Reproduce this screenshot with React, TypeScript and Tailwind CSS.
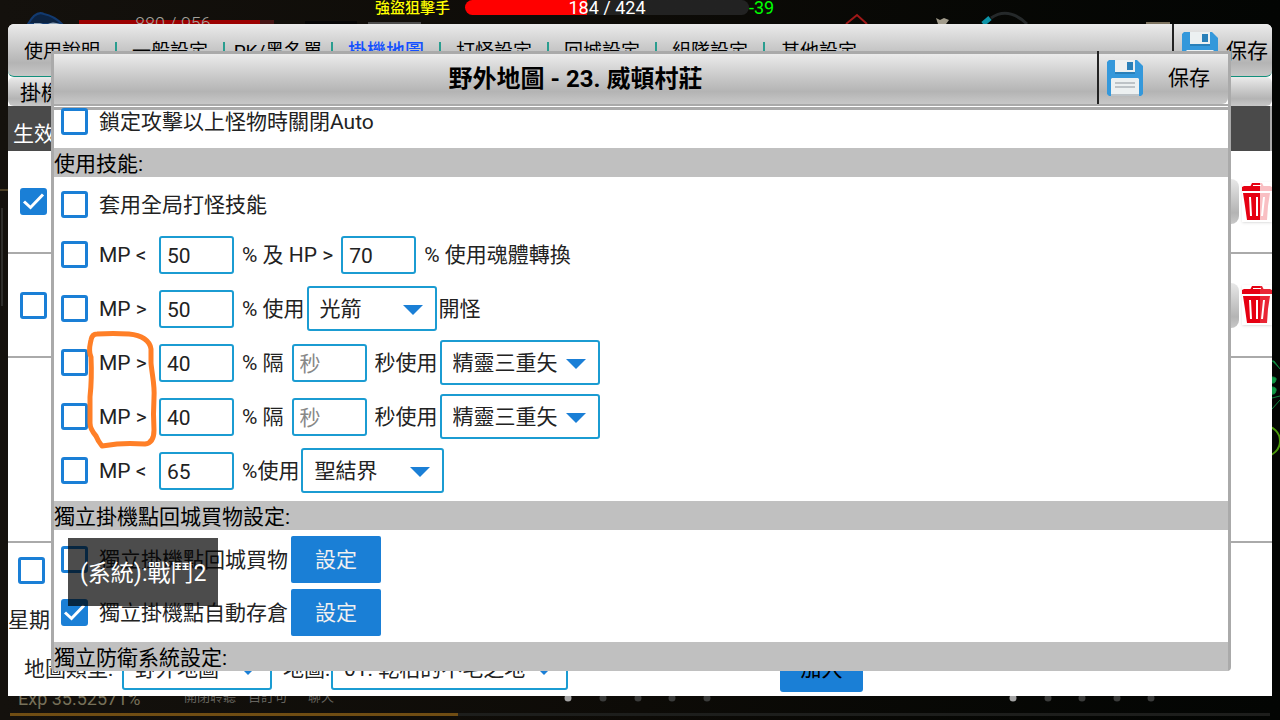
import React from "react";

const tabs = [
  "使用說明",
  "一般設定",
  "PK/黑名單",
  "掛機地圖",
  "打怪設定",
  "回城設定",
  "組隊設定",
  "其他設定",
];

const Checkbox = ({ label, checked = false }: { label: string; checked?: boolean }) => (
  <span className="relative w-[27px] h-[27px] shrink-0">
    <input
      type="checkbox"
      aria-label={label}
      defaultChecked={checked}
      className="peer block appearance-none w-full h-full rounded-[3px] border-[3px] border-[#1a7fd6] bg-white checked:bg-[#1a7fd6]"
    />
    <svg
      viewBox="0 0 27 27"
      fill="none"
      stroke="white"
      strokeWidth="3"
      className="hidden peer-checked:block absolute inset-0 pointer-events-none"
    >
      <path d="M4 13.500 L10.500 19.500 L23 6.500" />
    </svg>
  </span>
);

const Label = ({ children, className = "" }: { children: React.ReactNode; className?: string }) => (
  <span className={`pt-[3px] whitespace-pre ${className}`}>{children}</span>
);

const NumberBox = ({ label, value, placeholder }: { label: string; value?: string; placeholder?: string }) => (
  <input
    type="text"
    aria-label={label}
    defaultValue={value}
    placeholder={placeholder}
    className="w-[75px] h-[38px] mx-2 pt-[2px] px-[6px] shrink-0 rounded-[3px] border-2 border-[#1b9cd2] bg-white text-[#222] placeholder:text-[#888] outline-none"
  />
);

const SelectBox = ({ label, value, className }: { label: string; value: string; className: string }) => (
  <span className={`relative shrink-0 ${className}`}>
    <select
      aria-label={label}
      className="block appearance-none w-full h-full pt-[2px] pl-[11px] rounded-[3px] border-2 border-[#1b9cd2] bg-white outline-none"
    >
      <option>{value}</option>
    </select>
    <svg viewBox="0 0 20 10" className="absolute right-[14px] top-1/2 -mt-1 w-5 h-[10px] pointer-events-none">
      <path d="M0 0h20L10 10z" fill="#1a7fd6" />
    </svg>
  </span>
);

const SectionTitle = ({ children }: { children: React.ReactNode }) => (
  <h3 className="h-[29px] leading-[32px] bg-[#c0c0c0] text-black">{children}</h3>
);

const FloppyIcon = () => (
  <svg viewBox="0 0 36 36" className="w-9 h-9 shrink-0">
    <path d="M2 0h28l6 6v28l-2 2H2l-2-2V2z" fill="#3498db" />
    <path d="M8 12h20v2H8z" fill="#2980b9" />
    <path d="M8 0h20v12H8z" fill="#ecf0f1" />
    <path d="M20 2h6v8h-6z" fill="#2980b9" />
    <path d="M4 19l1-1h26l1 1v17H4z" fill="#ecf0f1" />
    <path d="M8 22h20v2H8zM8 26h20v2H8zM4 34h28v2H4z" fill="#bdc3c7" />
  </svg>
);

const TrashButton = ({ fade }: { fade: string }) => (
  <button aria-label="刪除" className="w-[30px] h-10 ml-[3px] bg-white shadow-sm">
    <svg viewBox="0 0 30 40" className="w-[30px] h-10">
      <path d="M8 5l2-4h10l2 4h-3V3h-8v2z" fill="#e60012" />
      <path d="M2 4h26l2 1v4H0V5z" fill="#e60012" />
      <path d="M1 11h27l-2 13-1 14H5L3 24z" fill="#e60012" />
      <path d="M8 15l1 19M15 15v19M22 15l-2 19" stroke="white" strokeWidth="2" />
      <path d="M18 0h12v40H18z" fill="white" className={fade} />
    </svg>
  </button>
);

const MapRow = ({ label, checked, fade }: { label: string; checked?: boolean; fade: string }) => (
  <div className="flex items-center justify-between h-full pl-3">
    <Checkbox label={label} checked={checked} />
    <div className="flex items-center">
      <button
        aria-label="編輯"
        className="w-20 h-[45px] rounded-lg bg-linear-to-b from-[#e8e8e8] via-[#b4b4b4] via-75% to-[#c8c8c8]"
      ></button>
      <TrashButton fade={fade} />
    </div>
  </div>
);

// game scene that shows round the panel
const Scene = () => (
  <svg
    viewBox="0 0 1280 720"
    preserveAspectRatio="none"
    fill="none"
    className="absolute inset-0 w-full h-full"
  >
    <path d="M28 24q8-14 16-10 10 2 18 10z" fill="#0c2342" stroke="#123a70" strokeWidth="2" />
    <path d="M34 24v-1h9l-3 1zM48 24q4-3 12 0z" fill="#8fa3b8" />
    <path d="M79 20h181v4H79z" fill="#9c0000" />
    <path d="M260 20h14v4h-14z" fill="#451414" />
    <path d="M305 21h52v3h-52z" fill="#050505" />
    <path d="M368 22h53v2h-53z" fill="#4d4d4d" />
    <path d="M846 24l11-9 10 9" stroke="#a01818" strokeWidth="2" />
    <path d="M936 18l4 2 4-2 5 2-3 4h-8z" fill="#a29c8c" />
    <path d="M991 18q17-12 36 6" stroke="#25292a" strokeWidth="3" />
    <path d="M983 24l7-6" stroke="#0d94a8" strokeWidth="5" />
    <path d="M1146 23h24" stroke="#7c725f" strokeWidth="2" />
    <path d="M0 190h8" stroke="#4b3e25" strokeWidth="2" />
    <path d="M2 208v98" stroke="#2f2e2b" strokeWidth="2" />
    <path d="M1272 361h2l6 8M1272 377q5 0 4 3-1 4-4 3zM1272 387q5 0 4 4-1 4-4 3zM1272 398l8-2M1272 409l8-9" fill="#0f9a44" stroke="#0f8a40" />
    <circle cx="1265" cy="441" r="15" stroke="#4c9a0c" strokeWidth="2" />
    <path d="M458 714.500h812" stroke="#1d1e1c" strokeWidth="3" />
    <path d="M10 714.500h448" stroke="#704d13" strokeWidth="3" />
    <g fill="#3b3c3b">
      <circle cx="603" cy="698" r="3.500" />
      <circle cx="638" cy="698" r="3.500" />
      <circle cx="672" cy="698" r="3.500" />
      <circle cx="707" cy="698" r="3.500" />
      <circle cx="1048" cy="698" r="3.500" />
      <circle cx="1082" cy="698" r="3.500" />
      <circle cx="1117" cy="698" r="3.500" />
      <circle cx="1151" cy="698" r="3.500" />
    </g>
    <circle cx="568" cy="698" r="3.500" fill="#a5a5a5" />
    <circle cx="1013" cy="698" r="3.500" fill="#a5a5a5" />
  </svg>
);

const TopHud = () => (
  <div className="relative h-6 shrink-0 flex items-start">
    <p className="w-[375px] pl-[135px] pt-[14px] h-6 overflow-hidden text-[18px] leading-5 font-light text-[#a5a29c]">
      880 / 956
    </p>
    <p className="w-[90px] text-[15px] leading-4 font-medium text-[#ffff00]">強盜狙擊手</p>
    <div className="w-[284px] h-[15px] rounded-full overflow-hidden text-center text-[18px] leading-[15px] text-white bg-linear-to-r from-[#ff0000] from-43% to-[#222] to-43%">
      184 / 424
    </div>
    <p className="text-[18px] leading-[15px] text-[#00ff00]">-39</p>
  </div>
);

const BottomHud = () => (
  <div className="relative h-6 shrink-0 flex items-start overflow-hidden text-[13px] leading-none text-[#66645f]">
    <p className="w-[184px] pl-[18px] -mt-[6px] text-[18px] text-[#777059]">Exp 35.52571%</p>
    <p className="-mt-[6px] flex">
      <span className="w-16">開閉聆聽</span>
      <span className="w-[60px]">自訂句</span>
      <span>聊天</span>
    </p>
  </div>
);

const SettingsPanel = () => (
  <div className="relative flex-1 mx-2 flex flex-col bg-white rounded-t-md text-black">
    <header className="flex h-[53px] shrink-0 rounded-md border-b border-[#12907c] bg-linear-to-b from-[#ebebeb] via-[#b4b4b4] via-75% to-[#c8c8c8]">
      <nav className="flex flex-1 items-center pl-px text-[19px] leading-5">
        {tabs.map((tab) => (
          <a
            key={tab}
            href="#"
            className={
              tab === "掛機地圖"
                ? "w-[108px] h-4 text-center border-r-2 border-[#2a9d8f] font-medium text-[#1450ff]"
                : "w-[108px] h-4 text-center border-r-2 border-[#2a9d8f] last:border-0"
            }
          >
            {tab}
          </a>
        ))}
      </nav>
      <button className="flex items-center gap-2 w-[100px] pl-2 border-l-2 border-[#222]">
        <FloppyIcon />
        <Label>保存</Label>
      </button>
    </header>
    <div className="h-[29px] shrink-0 pl-3 rounded-md leading-[32px] bg-linear-to-b from-[#ebebeb] via-[#b4b4b4] via-75% to-[#c8c8c8]">
      掛機地圖
    </div>
    <div className="h-[45px] shrink-0 pl-[5px] pt-1 border-r-2 border-[#aaa] leading-[48px] bg-[#4a4a4a] text-white">
      生效
    </div>
    <div className="h-[103px] shrink-0 border-b-2 border-[#aaa]">
      <MapRow label="生效 1" checked fade="opacity-75" />
    </div>
    <div className="h-[104px] shrink-0 border-b-2 border-[#aaa]">
      <MapRow label="生效 2" fade="opacity-15" />
    </div>
    <div className="flex-1 border-b-2 border-[#aaa]"></div>
    <div className="shrink-0 pt-[14px] pb-1 flex flex-col">
      <div className="flex pl-[10px]">
        <Checkbox label="星期" />
      </div>
      <p className="mt-6 h-6 leading-6 text-[#222]">星期</p>
      <div className="mt-[13px] flex items-center h-[47px] pl-4 text-[#222]">
        <Label className="w-[98px]">地圖類型:</Label>
        <SelectBox label="地圖類型" value="野外地圖" className="w-[150px] h-[42px]" />
        <Label className="w-[59px] pl-[11px]">地圖:</Label>
        <SelectBox label="地圖" value="01. 乾枯的不毛之地" className="w-[237px] h-[42px]" />
        <button className="ml-[212px] w-[83px] h-[47px] pt-[2px] rounded-[3px] bg-[#1a7fd6] text-black">加入</button>
      </div>
    </div>
  </div>
);

const SpellRow = ({ label, children }: { label: string; children: React.ReactNode }) => (
  <div className="flex items-center h-[45px] pl-[7px]">
    <Checkbox label={label} />
    <Label className="w-[52px] ml-[11px]">{label}</Label>
    {children}
  </div>
);

const MapDialog = () => (
  <div
    role="dialog"
    aria-label="野外地圖"
    className="absolute top-[51px] left-[51px] right-[49px] border-x-[3px] border-t-[3px] border-[#aaa] rounded-b-sm bg-white text-[#222]"
  >
    <header className="flex h-[50px] rounded-br-md text-black bg-linear-to-b from-[#ebebeb] via-[#b4b4b4] via-75% to-[#c8c8c8]">
      <h2 className="flex-1 text-center text-[24px] leading-[50px] font-bold">野外地圖 - 23. 威頓村莊</h2>
      <button className="flex items-center w-[131px] -mt-[3px] pl-2 gap-[25px] border-l-2 border-[#222]">
        <FloppyIcon />
        <Label>保存</Label>
      </button>
    </header>
    <div className="h-[6px] border-t-2 border-b-[3px] border-[#aaa]"></div>

    <div className="relative flex items-center h-[41px] -mt-[3px] pb-[13px] pl-[7px] gap-[11px]">
      <Checkbox label="鎖定攻擊以上怪物時關閉Auto" />
      <Label>鎖定攻擊以上怪物時關閉Auto</Label>
    </div>

    <SectionTitle>使用技能:</SectionTitle>
    <div className="flex items-center h-[54px] pl-[7px] gap-[11px]">
      <Checkbox label="套用全局打怪技能" />
      <Label>套用全局打怪技能</Label>
    </div>
    <div className="flex flex-col gap-[9px] pt-[1px] pb-2">
      <SpellRow label="MP <">
        <NumberBox label="MP" value="50" />
        <Label>% 及 HP &gt;</Label>
        <NumberBox label="HP" value="70" />
        <Label>% 使用魂體轉換</Label>
      </SpellRow>
      <SpellRow label="MP >">
        <NumberBox label="MP" value="50" />
        <Label>% 使用</Label>
        <SelectBox label="技能" value="光箭" className="w-[130px] h-[45px] mx-[2px]" />
        <Label>開怪</Label>
      </SpellRow>
      <SpellRow label="MP >">
        <NumberBox label="MP" value="40" />
        <Label>% 隔</Label>
        <NumberBox label="秒" placeholder="秒" />
        <Label>秒使用</Label>
        <SelectBox label="技能" value="精靈三重矢" className="w-[160px] h-[45px] mx-[2px]" />
      </SpellRow>
      <SpellRow label="MP >">
        <NumberBox label="MP" value="40" />
        <Label>% 隔</Label>
        <NumberBox label="秒" placeholder="秒" />
        <Label>秒使用</Label>
        <SelectBox label="技能" value="精靈三重矢" className="w-[160px] h-[45px] mx-[2px]" />
      </SpellRow>
      <SpellRow label="MP <">
        <NumberBox label="MP" value="65" />
        <Label>%使用</Label>
        <SelectBox label="技能" value="聖結界" className="w-[143px] h-[45px] mx-[2px]" />
      </SpellRow>
    </div>

    <SectionTitle>獨立掛機點回城買物設定:</SectionTitle>
    <div className="flex flex-col gap-[6px] py-[6px] pl-[7px]">
      <div className="flex items-center">
        <Checkbox label="獨立掛機點回城買物" />
        <Label className="ml-[11px]">獨立掛機點回城買物</Label>
        <button className="ml-[3px] w-[90px] h-[47px] pt-[2px] rounded-[2px] bg-[#1a7fd6] text-[#f0f0f0]">設定</button>
      </div>
      <div className="flex items-center">
        <Checkbox label="獨立掛機點自動存倉" checked />
        <Label className="ml-[11px]">獨立掛機點自動存倉</Label>
        <button className="ml-[3px] w-[90px] h-[47px] pt-[2px] rounded-[2px] bg-[#1a7fd6] text-[#f0f0f0]">設定</button>
      </div>
    </div>
    <SectionTitle>獨立防衛系統設定:</SectionTitle>

    {/* hand drawn marker round the two MP conditions */}
    <svg
      viewBox="0 0 74 122"
      fill="none"
      stroke="#ff7f27"
      strokeWidth="5"
      strokeLinecap="round"
      strokeLinejoin="round"
      className="absolute left-[31px] top-[273px] w-[74px] h-[122px] pointer-events-none"
    >
      <path d="M6 30C3 24 5 18 6 13Q7 7 12 7Q28 6 44 7C57 8 65 14 66 22L66 36C67 48 70 58 69 71Q68 87 69 103Q69 116 60 117Q44 116 32 117L17 119Q13 114 11 109Q5 102 5 96L5 70Q7 52 6 30" />
    </svg>
  </div>
);

const App = () => {
  return (
    <div className="relative flex flex-col h-screen min-h-[720px] overflow-hidden bg-linear-to-r from-[#14110d] via-[#0d0b07] to-[#030503] font-['Roboto','Noto_Sans_CJK_TC',sans-serif] text-[21px]">
      <Scene />
      <TopHud />
      <SettingsPanel />
      <BottomHud />
      <MapDialog />
      <div
        role="status"
        className="absolute left-[68px] top-[538px] w-[150px] h-[68px] pl-3 leading-[72px] text-[23px] text-white bg-black/70"
      >
        (系統):戰鬥2
      </div>
    </div>
  );
};

export default App;
